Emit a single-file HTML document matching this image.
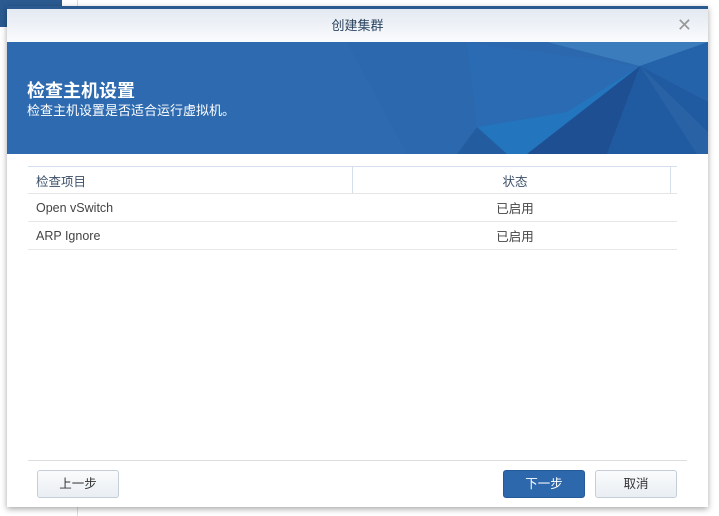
<!DOCTYPE html>
<html><head><meta charset="utf-8"><style>
*{margin:0;padding:0;box-sizing:border-box}
body{width:719px;height:516px;background:#fff;position:relative;overflow:hidden;font-family:"Liberation Sans","Noto Sans CJK SC",sans-serif}
.bgblk{position:absolute;left:0;top:0;width:62px;height:27px;background:#2a5a90}
.bgline{position:absolute;left:77px;top:0;width:1px;height:516px;background:#ddd}
.dlg{position:absolute;left:7px;top:6px;width:701px;height:501px;background:#fff;border-top:3px solid #2a5a90;box-shadow:0 2px 6px rgba(0,0,0,.35)}
.hdr{height:33px;background:linear-gradient(#e3e9f1,#fafbfd);text-align:center;line-height:33px;font-size:13px;color:#2c4460}
.x{position:absolute;right:16px;top:0;line-height:33px;font-size:18px;color:#999}
.ban{position:relative;height:112px;background:#2d6aaf;overflow:hidden}
.ban h1{position:absolute;left:20px;top:35px;font-size:18px;color:#fff;font-weight:bold}
.ban p{position:absolute;left:20px;top:58px;font-size:13px;color:#fff}
table{position:absolute;left:21px;top:157px;width:649px;border-collapse:collapse;font-size:12.5px;color:#444}
th{font-weight:normal;height:27px;border-top:1px solid #d5e0ee;border-bottom:1px solid #e5e5e5;color:#3a4e66}
td{height:28px;border-bottom:1px solid #e8e8e8}
.foot{position:absolute;left:21px;right:21px;top:451px;border-top:1px solid #ddd}
.btn{position:absolute;top:470px;height:28px;width:82px;border:1px solid #c5ced8;border-radius:3px;background:linear-gradient(#fafbfc,#e9eef3);font-size:12.5px;color:#333;text-align:center;line-height:26px}
.pri{background:#2d68ad;border-color:#245a99;color:#fff}
</style></head><body>
<div class="bgblk"></div><div class="bgline"></div>
<div class="dlg">
<div class="hdr">创建集群</div><div class="x">✕</div>
<div class="ban">
<svg width="701" height="112" style="position:absolute;left:0;top:0">
<polygon points="340,0 701,0 701,112 400,112" fill="#2c68ad"/>
<polygon points="460,0 633,24 560,70 470,85" fill="#2a6bb3"/>
<polygon points="540,0 633,24 701,0" fill="#3b7cbc"/>
<polygon points="633,24 701,0 701,60" fill="#2463a9"/>
<polygon points="470,85 560,70 633,24 520,112 450,112" fill="#2375bd"/>
<polygon points="633,24 520,112 600,112" fill="#1d4f92"/>
<polygon points="633,24 600,112 701,112 701,60" fill="#205aa0"/>
<polygon points="633,24 690,112 701,112 701,90" fill="#2a62a6"/>
<polygon points="470,85 450,112 500,112" fill="#245ca0"/>
</svg>
<h1>检查主机设置</h1><p>检查主机设置是否适合运行虚拟机。</p>
</div>
<table>
<tr><th style="text-align:left;padding-left:8px;width:324px;border-right:1px solid #d5e0ee">检查项目</th><th style="border-right:1px solid #d5e0ee;padding-left:8px">状态</th><th style="width:7px"></th></tr>
<tr><td style="padding-left:8px">Open vSwitch</td><td style="text-align:center;padding-left:8px">已启用</td><td></td></tr>
<tr><td style="padding-left:8px">ARP Ignore</td><td style="text-align:center;padding-left:8px">已启用</td><td></td></tr>
</table>
<div class="foot"></div>
</div>
<div class="btn" style="left:37px">上一步</div>
<div class="btn pri" style="left:503px">下一步</div>
<div class="btn" style="left:595px">取消</div>
</body></html>
